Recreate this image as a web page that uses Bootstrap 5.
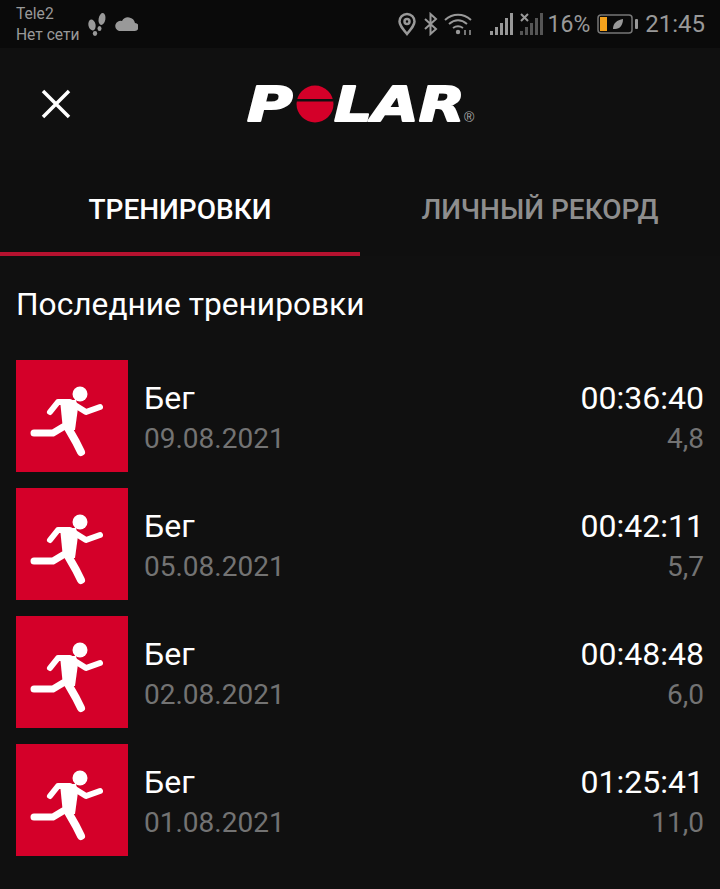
<!DOCTYPE html>
<html lang="en">
<head>
  <meta charset="UTF-8">
  <title>Polar</title>
  <meta name="viewport" content="width=device-width, initial-scale=1">
  <link href="https://cdn.jsdelivr.net/npm/bootstrap@5.3.3/dist/css/bootstrap.min.css" rel="stylesheet">
  <style>
    body { background-color: #101010; font-family: Roboto, sans-serif; color: #fff; height: 889px; overflow: hidden; }
    .status-bar { height: 48px; background: #0a0a0a; color: #999; padding: 0 15px 0 16px; }
    .carrier { font-size: 15.6px; line-height: 21px; margin-top: 2px; white-space: nowrap; }
    .status-num { font-size: 23px; line-height: 1; }
    .status-clock { font-size: 24px; line-height: 1; margin-left: 7px; }
    .gap-bt { margin-left: 6px; }
    .gap-wifi { margin-left: 5px; }
    .gap-bars { margin-left: 16px; }
    .gap-batt { margin-left: 7px; }
    .top-bar { height: 112px; position: relative; }
    .close-btn { margin-left: 40px; }
    .brand-logo { position: absolute; left: 245px; top: 32px; overflow: visible; }
    .brand-letter { font-family: "DejaVu Sans", sans-serif; font-weight: 700; font-style: oblique; font-size: 48px; fill: #fff; stroke: #fff; stroke-width: 1.8px; stroke-linejoin: round; }
    .brand-reg { font-family: "Liberation Sans", sans-serif; font-size: 14px; fill: #aaa; }
    .tab-bar { height: 96px; background: #0f0f0f; }
    .tab-item { width: 50%; font-size: 28px; font-weight: 500; color: #8e8e8e; padding-top: 4px; }
    .tab-item.on { color: #fff; border-bottom: 4px solid #b5122f; padding-top: 8px; }
    .list-title { font-size: 31.7px; line-height: 34px; margin: 32px 16px 38px; font-weight: 400; }
    .run-row { height: 112px; margin: 0 16px 16px; }
    .run-tile { width: 112px; height: 112px; background: #d40029; }
    .run-text { padding-top: 4px; }
    .run-main { font-size: 32px; line-height: 41px; }
    .run-sub { font-size: 28px; line-height: 40px; color: #737373; }
  </style>
</head>
<body>

<div class="status-bar d-flex align-items-center justify-content-between">
  <div class="d-flex align-items-center">
    <div class="carrier">Tele2<br>Нет сети</div>
    <svg class="ms-1" width="26" height="30" viewBox="0 0 26 30" fill="#999">
      <ellipse cx="8" cy="16" rx="3.6" ry="5.5" transform="rotate(-12 8 16)"/>
      <ellipse cx="11" cy="24.500" rx="2.200" ry="2.400"/>
      <ellipse cx="18" cy="10" rx="3.400" ry="6" transform="rotate(10 18 10)"/>
      <ellipse cx="15.500" cy="19.500" rx="2" ry="2.600"/>
    </svg>
    <svg class="ms-1" width="24" height="16" viewBox="0 0 24 16" fill="#999">
      <path d="M5 15h15a4 4 0 0 0 1-8 7 7 0 0 0-13-2 5 5 0 0 0-3 10z"/>
    </svg>
  </div>
  <div class="d-flex align-items-center">
    <svg width="20" height="24" viewBox="0 0 20 24" fill="none" stroke="#999" stroke-width="2.500">
      <path d="M10 22C5 16 2.500 13 2.500 9.500a7.500 7.500 0 0 1 15 0C17.500 13 15 16 10 22z"/>
      <circle cx="10" cy="9.500" r="2.500"/>
    </svg>
    <svg class="gap-bt" width="16" height="24" viewBox="0 0 16 24" fill="none" stroke="#999" stroke-width="2">
      <path d="M2 7l11 10-5.500 5V2L13 7 2 17"/>
    </svg>
    <svg class="gap-wifi" width="30" height="24" viewBox="0 0 30 24" fill="none" stroke="#999" stroke-width="2">
      <path d="M1 8c8-7 18-7 26 0M5 12c6-5 12-5 18 0M9 16c3-2 7-2 10 0"/>
      <circle cx="14" cy="20" r="2.200" fill="#999" stroke="none"/>
      <path d="M21 18v5M26 18v5" stroke-width="1.500"/>
    </svg>
    <svg class="gap-bars" width="24" height="24" viewBox="0 0 24 24" fill="#999">
      <rect x="0" y="19" width="3" height="4"/><rect x="5" y="15" width="3" height="8"/><rect x="10" y="11" width="3" height="12"/><rect x="15" y="6" width="3" height="17"/><rect x="20" y="1" width="3" height="22"/>
    </svg>
    <svg class="gap-bt" width="24" height="24" viewBox="0 0 24 24" fill="#555">
      <rect x="0" y="19" width="3" height="4"/><rect x="5" y="15" width="3" height="8"/><rect x="10" y="11" width="3" height="12"/><rect x="15" y="6" width="3" height="17"/><rect x="20" y="1" width="3" height="22"/>
      <path d="M1 2l7 7M8 2L1 9" stroke="#999" stroke-width="2"/>
    </svg>
    <span class="status-num ms-1">16%</span>
    <svg class="gap-batt" width="41" height="20" viewBox="0 0 41 20">
      <rect x="1" y="1" width="34" height="18" rx="3" fill="none" stroke="#777" stroke-width="1.500"/>
      <rect x="3" y="3" width="7" height="14" fill="#f5a21c"/>
      <path d="M16 15c0-6 4-9 10-10 0 6-3 10-8 10z" fill="#999"/>
      <rect x="38" y="5" width="3" height="10" rx="1" fill="#999"/>
    </svg>
    <span class="status-clock">21:45</span>
  </div>
</div>

<div class="top-bar d-flex align-items-center">
  <svg class="close-btn" width="32" height="32" viewBox="0 0 32 32" stroke="#fff" stroke-width="3.500">
    <path d="M3 3l26 26M29 3L3 29"/>
  </svg>
  <svg class="brand-logo" width="236" height="48" viewBox="0 0 236 48">
    <text class="brand-letter" transform="translate(2 41) scale(1.3 1)">P</text>
    <circle cx="70" cy="24" r="18.500" fill="#d40029"/>
    <rect x="50" y="19" width="38" height="2.500" fill="#101010"/>
    <text class="brand-letter" transform="translate(89 41) scale(1.25 1)">LAR</text>
    <text class="brand-reg" x="219" y="42">®</text>
  </svg>
</div>

<div class="tab-bar d-flex">
  <div class="tab-item on d-flex align-items-center justify-content-center">ТРЕНИРОВКИ</div>
  <div class="tab-item d-flex align-items-center justify-content-center">ЛИЧНЫЙ РЕКОРД</div>
</div>

<h1 class="list-title">Последние тренировки</h1>

<div id="runs"></div>

<script>
  const runs = [
    ['09.08.2021', '00:36:40', '4,8'],
    ['05.08.2021', '00:42:11', '5,7'],
    ['02.08.2021', '00:48:48', '6,0'],
    ['01.08.2021', '01:25:41', '11,0']
  ];
  const icon = `<svg width="112" height="112" viewBox="0 0 112 112" fill="none" stroke="#fff" stroke-linecap="round" stroke-linejoin="round">
    <circle cx="64" cy="34" r="7.500" fill="#fff" stroke="none"/>
    <path d="M34 52l8-10h12l16 10 14-5" stroke-width="6"/>
    <path d="M47 67L37 73H18" stroke-width="7"/>
    <path d="M52 68l8 14 5 10" stroke-width="8"/>
    <path d="M44 40h16l2 8-3 22H47z" fill="#fff" stroke="none"/>
  </svg>`;
  document.getElementById('runs').innerHTML = runs.map(r => `
    <div class="run-row d-flex align-items-center">
      <div class="run-tile flex-shrink-0">${icon}</div>
      <div class="run-text ms-3 flex-grow-1">
        <div class="run-main">Бег</div>
        <div class="run-sub">${r[0]}</div>
      </div>
      <div class="run-text text-end">
        <div class="run-main">${r[1]}</div>
        <div class="run-sub">${r[2]}</div>
      </div>
    </div>`).join('');
</script>

</body>
</html>
